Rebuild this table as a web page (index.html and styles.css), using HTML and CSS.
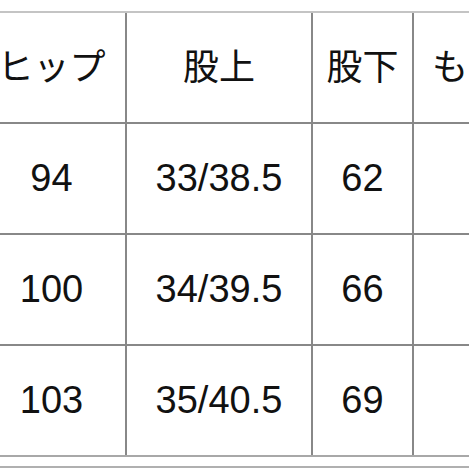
FILE: index.html
```html
<!DOCTYPE html>
<html lang="ja">
<head>
<meta charset="utf-8">
<link rel="stylesheet" href="styles.css">
</head>
<body>
<div class="page">
  <div class="table">
    <div class="row head">
      <div class="cell c1">ヒップ</div>
      <div class="cell c2">股上</div>
      <div class="cell c3">股下</div>
      <div class="cell c4">もも周り</div>
    </div>
    <div class="row">
      <div class="cell c1">94</div>
      <div class="cell c2">33/38.5</div>
      <div class="cell c3">62</div>
      <div class="cell c4"></div>
    </div>
    <div class="row">
      <div class="cell c1">100</div>
      <div class="cell c2">34/39.5</div>
      <div class="cell c3">66</div>
      <div class="cell c4"></div>
    </div>
    <div class="row">
      <div class="cell c1">103</div>
      <div class="cell c2">35/40.5</div>
      <div class="cell c3">69</div>
      <div class="cell c4"></div>
    </div>
  </div>
  <div class="below"></div>
</div>
</body>
</html>
```

FILE: styles.css
```css
html, body {
  margin: 0;
  padding: 0;
  background: #ffffff;
}
body {
  font-family: "Liberation Sans", "Noto Sans CJK JP", sans-serif;
  color: #111111;
}
.page {
  width: 469px;
  height: 469px;
  overflow: hidden;
  padding-top: 11px;
  box-sizing: border-box;
}
.table {
  margin-left: -22px;
  width: 600px;
  border-top: 2px solid #c4c4c4;
}
.row {
  display: flex;
  height: 111px;
  box-sizing: border-box;
  border-bottom: 2px solid #888888;
}
.row:last-child {
  border-bottom-color: #a8a8a8;
}
.cell {
  box-sizing: border-box;
  border-right: 2px solid #888888;
  display: flex;
  align-items: center;
  justify-content: center;
  font-size: 38px;
  white-space: nowrap;
}
.head .cell {
  font-family: "Noto Sans CJK JP", sans-serif;
  font-size: 36px;
  padding-bottom: 8px;
}
.head .c4 {
  padding-bottom: 8px;
}
.c1 { width: 149px; }
.c2 { width: 186px; }
.c3 { width: 101px; }
.c4 {
  width: 164px;
  justify-content: flex-start;
  padding-left: 18px;
}
.below {
  margin-top: 9px;
  height: 2px;
  background: #b0b0b0;
}
```
